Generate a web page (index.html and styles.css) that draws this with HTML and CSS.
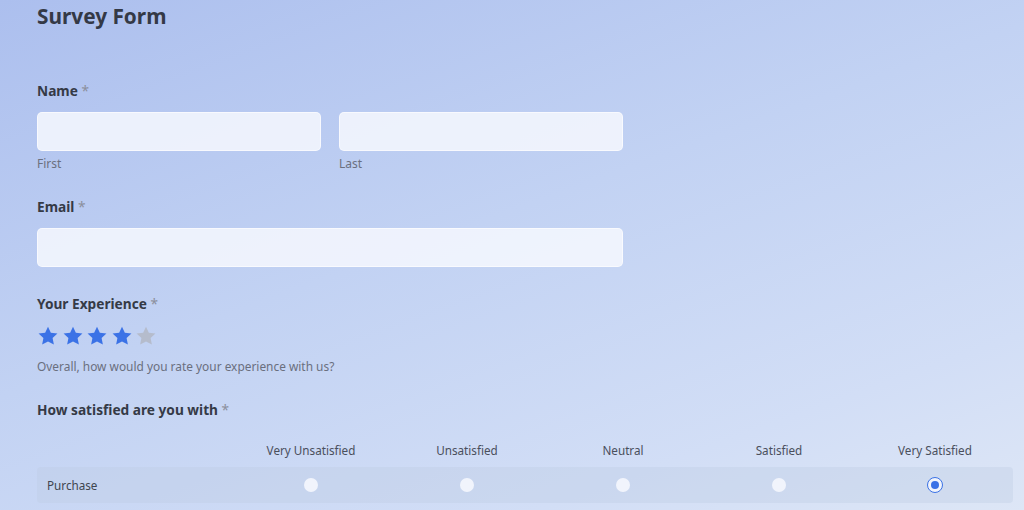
FILE: index.html
```html
<!DOCTYPE html>
<html>
<head>
<meta charset="utf-8">
<link rel="stylesheet" href="styles.css">
</head>
<body>
<div class="page">
  <h1 class="title">Survey Form</h1>

  <div class="field name-field">
    <div class="label">Name <span class="req">*</span></div>
    <div class="name-row">
      <div class="sub">
        <div class="input"></div>
        <div class="sublabel">First</div>
      </div>
      <div class="sub">
        <div class="input"></div>
        <div class="sublabel">Last</div>
      </div>
    </div>
  </div>

  <div class="field email-field">
    <div class="label">Email <span class="req">*</span></div>
    <div class="input wide"></div>
  </div>

  <div class="field exp-field">
    <div class="label">Your Experience <span class="req">*</span></div>
    <div class="stars">
      <svg class="star on" viewBox="0 0 24 24"><path d="M12 1.8l3.1 6.6 7.2.9-5.3 5 1.4 7.1L12 17.9l-6.4 3.5L7 14.3l-5.3-5 7.2-.9z"/></svg>
      <svg class="star on" viewBox="0 0 24 24"><path d="M12 1.8l3.1 6.6 7.2.9-5.3 5 1.4 7.1L12 17.9l-6.4 3.5L7 14.3l-5.3-5 7.2-.9z"/></svg>
      <svg class="star on" viewBox="0 0 24 24"><path d="M12 1.8l3.1 6.6 7.2.9-5.3 5 1.4 7.1L12 17.9l-6.4 3.5L7 14.3l-5.3-5 7.2-.9z"/></svg>
      <svg class="star on" viewBox="0 0 24 24"><path d="M12 1.8l3.1 6.6 7.2.9-5.3 5 1.4 7.1L12 17.9l-6.4 3.5L7 14.3l-5.3-5 7.2-.9z"/></svg>
      <svg class="star off" viewBox="0 0 24 24"><path d="M12 1.8l3.1 6.6 7.2.9-5.3 5 1.4 7.1L12 17.9l-6.4 3.5L7 14.3l-5.3-5 7.2-.9z"/></svg>
    </div>
    <div class="help">Overall, how would you rate your experience with us?</div>
  </div>

  <div class="field sat-field">
    <div class="label">How satisfied are you with <span class="req">*</span></div>
    <div class="likert">
      <div class="lk-head">
        <div class="lk-label"></div>
        <div class="lk-col">Very Unsatisfied</div>
        <div class="lk-col">Unsatisfied</div>
        <div class="lk-col">Neutral</div>
        <div class="lk-col">Satisfied</div>
        <div class="lk-col">Very Satisfied</div>
      </div>
      <div class="lk-row">
        <div class="lk-label">Purchase</div>
        <div class="lk-col"><span class="radio"></span></div>
        <div class="lk-col"><span class="radio"></span></div>
        <div class="lk-col"><span class="radio"></span></div>
        <div class="lk-col"><span class="radio"></span></div>
        <div class="lk-col"><span class="radio checked"></span></div>
      </div>
    </div>
  </div>
</div>
</body>
</html>
```

FILE: styles.css
```css
* { box-sizing: border-box; }
html, body { margin: 0; padding: 0; }
body {
  width: 1024px;
  height: 510px;
  overflow: hidden;
  font-family: "Noto Sans", "Open Sans", sans-serif;
  color: #373c48;
  background: linear-gradient(160deg, #acbfee 0%, #c2d2f3 45%, #d2def6 80%, #dde6f6 100%);
}
.page {
  padding: 0 11px 0 37px;
}
.title {
  margin: 0;
  padding-top: 2px;
  font-size: 20.8px;
  line-height: 28px;
  font-weight: 700;
  color: #343946;
}
.name-field { margin-top: 51px; }
.email-field { margin-top: 25px; }
.exp-field { margin-top: 27px; }
.sat-field { margin-top: 25px; }
.label {
  font-size: 13.7px;
  font-weight: 700;
  line-height: 20px;
  color: #353a46;
  margin-bottom: 11px;
}
.req { color: #8b8f9c; font-weight: 400; }
.name-row {
  display: flex;
  gap: 18px;
  width: 586px;
}
.sub { flex: 1; }
.input {
  height: 39px;
  border-radius: 5px;
  background: rgba(246, 248, 254, 0.85);
  border: 1px solid rgba(255,255,255,0.6);
}
.input.wide { width: 586px; }
.sublabel {
  font-size: 12px;
  line-height: 16px;
  margin-top: 5px;
  color: #6b7080;
}
.stars {
  display: flex;
  gap: 2.5px;
  height: 22px;
}
.star { width: 22px; height: 22px; }
.star.on path { fill: #3b72e6; }
.star.off path { fill: #b5bccc; }
.help {
  margin-top: 10px;
  font-size: 11.9px;
  line-height: 18px;
  color: #6a6f7e;
}
.likert { width: 976px; margin-top: 13px; }
.lk-head, .lk-row {
  display: grid;
  grid-template-columns: 196px repeat(5, 156px);
  align-items: center;
}
.lk-head {
  height: 34px;
  font-size: 11.7px;
  color: #4a4f5c;
}
.lk-row {
  height: 36px;
  background: rgba(190, 202, 225, 0.35);
  border-radius: 4px;
  font-size: 11.7px;
  color: #40454f;
}
.lk-row .lk-label { padding-left: 10px; }
.lk-col { text-align: center; display: flex; justify-content: center; align-items: center; }
.radio {
  display: inline-block;
  width: 14px;
  height: 14px;
  border-radius: 50%;
  background: #f1f4fc;
}
.radio.checked {
  background: #f1f4fc;
  border: 1.5px solid #3b72e6;
  position: relative;
  width: 16px;
  height: 16px;
}
.radio.checked::after {
  content: "";
  position: absolute;
  left: 50%;
  top: 50%;
  width: 8px;
  height: 8px;
  margin: -4px 0 0 -4px;
  border-radius: 50%;
  background: #3b72e6;
}
```
